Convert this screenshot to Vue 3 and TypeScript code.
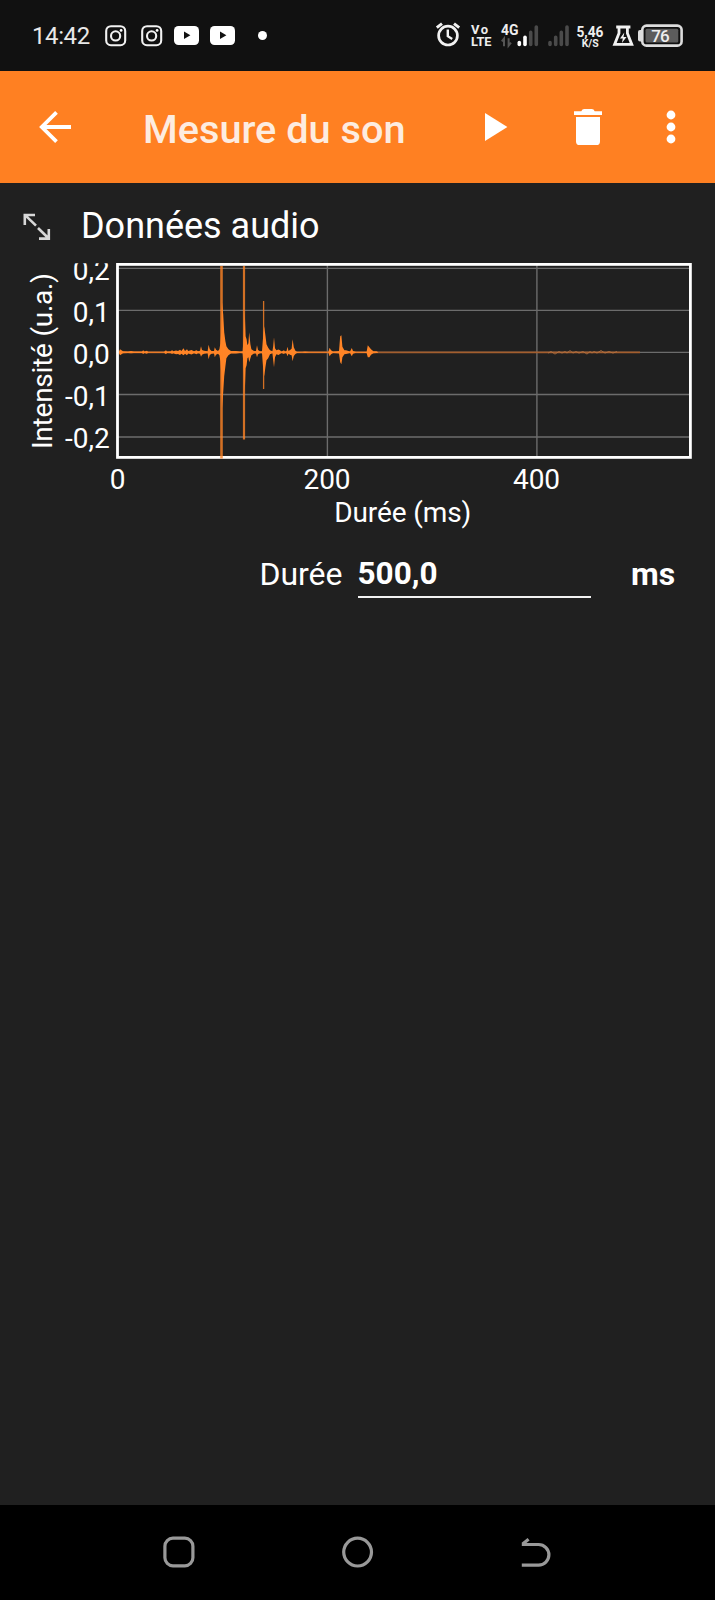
<script setup lang="ts">
type Sample = [x: number, up: number, down: number]

const baseline = 102.3
const top = 14
const bottom = 208.5

// Envelope of the audio signal: horizontal position, height above and below zero
const envelope: Sample[] = [
  [119, 1, 1], [120, 3, 3], [121.5, 2, 2], [123, 1, 1], [128, 0.7, 0.7], [131, 1.3, 1], [134, 0.7, 0.7],
  [142, 0.8, 0.8], [143.2, 2, 1.6], [144.4, 0.7, 0.7], [147, 1.6, 1.4], [148, 0.5, 0.5], [164, 0.5, 0.5],
  [166, 2, 2], [167, 0.8, 0.8], [171, 1, 1], [172, 2.4, 1.6], [173.2, 1, 1], [176, 1.8, 2], [178, 1.4, 1.6],
  [180, 2.6, 2.6], [181.4, 1.4, 1.4], [183.5, 4, 3], [185, 1.4, 1.4], [187, 3, 3], [188.2, 1.2, 1.2],
  [191.5, 2.4, 2.2], [194, 1, 1], [196.5, 2, 2], [198, 1, 1], [200, 1.5, 1.5], [201, 6, 4.5], [202, 2.4, 2.4],
  [204, 1.5, 1.5], [207.6, 1, 1], [208.6, 7.5, 7], [209.8, 3, 2.6], [211.5, 1.4, 1.4], [214, 1.2, 1.2],
  [214.8, 5, 5], [216, 2.5, 2.5], [218, 1.4, 1.4], [219.4, 3, 3], [220.4, 9, 9], [221.2, 20, 20],
  [222, 50, 56], [223.2, 38, 40], [224.2, 20, 24], [225.4, 11, 14], [226.4, 6, 6], [228.4, 3, 3],
  [231, 1.2, 1.2], [236, 1.2, 1.2], [240, 0.8, 0.8], [242.6, 1, 1], [243.6, 14, 14], [244.8, 40, 40],
  [245.6, 16, 16], [246.6, 13, 13], [247.4, 7, 6], [248.4, 9, 5], [249.2, 20, 10], [250.4, 8, 6],
  [251.4, 3, 3], [254, 1.2, 1.2], [256, 1.2, 1.2], [257, 7, 5], [258, 2.2, 2], [260, 1, 1], [262, 1, 1],
  [263, 14, 14], [264.2, 26, 24], [265.4, 17, 15], [266.5, 8, 8], [268.2, 4.5, 6], [270, 2, 2],
  [272.4, 1, 1], [273.2, 6, 8], [274, 15, 15], [275, 4, 5], [276.4, 2, 2], [278.5, 2.8, 2.6], [280, 2, 1.8],
  [281.5, 0.7, 0.7], [284, 2, 1.6], [285, 0.8, 0.8], [286.5, 1.2, 1.2], [287.5, 5.5, 4], [288.5, 1.4, 1.4],
  [290.4, 2.6, 2.6], [291.6, 3.6, 3], [292.6, 13, 9], [293.8, 5, 3.8], [295.4, 1.6, 1.6], [297, 0.6, 0.6],
  [302, 0.5, 0.5], [305, 0.7, 0.7], [309, 0.5, 0.5], [328.4, 0.5, 0.5], [329.6, 4.5, 4], [331, 2, 2],
  [333, 0.7, 0.7], [337, 1, 1], [339, 1.2, 1.2], [340.2, 16, 10], [341.4, 17, 12], [342.4, 5.5, 5],
  [344.4, 2, 2], [346, 2, 1.8], [350, 0.8, 0.8], [351.8, 4.4, 4], [353, 1.4, 1.4], [356, 0.5, 0.5],
  [366.6, 0.6, 0.6], [367.8, 7, 5], [369.4, 5, 5], [371, 3, 2.4], [373.4, 1, 1], [376.5, 1, 0.8], [378, 0.4, 0.4],
]

const upper = envelope.map(([x, up]) => `${x},${baseline - up}`)
const lower = [...envelope].reverse().map(([x, , down]) => `${x},${baseline + down}`)
const wave = [...upper, ...lower].join(' ')

const quiet = [548, 551, 555, 559, 562, 565, 567, 570, 573, 576, 579, 583, 587, 590, 592, 594, 597, 601, 605, 609, 613, 617]
const ripple = quiet.map((x, i) => `${x},${baseline + (i % 2 ? -1 : 1) * (i % 5 === 2 ? 1.8 : 0.8)}`).join(' ')

const peaks: { x: number; from: number; to: number; width: number }[] = [
  { x: 221.5, from: top + 2, to: bottom, width: 2.6 },
  { x: 244, from: top + 2, to: 189.5, width: 2.2 },
  { x: 263.6, from: 51, to: 139, width: 1.3 },
]

const rows = [
  { y: 18.4, text: 30, label: '0,2' },
  { y: 60.4, text: 72.3, label: '0,1' },
  { y: 102.4, text: 114.3, label: '0,0' },
  { y: 144.5, text: 156.2, label: '-0,1' },
  { y: 187, text: 198, label: '-0,2' },
]
const columns = [
  { x: 118, label: '0' },
  { x: 327.4, label: '200' },
  { x: 536.9, label: '400' },
]
</script>

<template>
  <div class="screen">
    <header class="status">
      <div class="status-left">
        <span class="clock">14:42</span>
        <svg v-for="n in 2" :key="'i' + n" class="insta" viewBox="0 0 22 22">
          <rect x="1.2" y="1.2" width="19" height="19" rx="4.8" />
          <circle cx="10.6" cy="10.9" r="4.6" />
          <circle class="fill" cx="16.1" cy="5.4" r="1.4" />
        </svg>
        <svg v-for="n in 2" :key="'y' + n" class="tube" viewBox="0 0 25 19">
          <rect width="25" height="19" rx="4.5" />
          <path d="M10 5.6 16.4 9.3 10 13z" />
        </svg>
        <span class="dot"></span>
      </div>
      <svg class="status-right" viewBox="0 0 255 40">
        <g class="line">
          <circle cx="13" cy="21.6" r="9.4" stroke-width="2.7" />
          <path d="M12.8 15.4v6.8l4.4 2.8" stroke-width="2.4" />
          <path d="M1.8 13.6 7 9.6M19 9.6l5.2 4" stroke-width="3" />
        </g>
        <text x="36" y="20.2" class="bold" font-size="13" textLength="17">Vo</text>
        <text x="36" y="32.4" class="bold" font-size="13.6" textLength="20.5" lengthAdjust="spacingAndGlyphs">LTE</text>
        <text x="66" y="21.4" class="bold" font-size="14" textLength="17.5" lengthAdjust="spacingAndGlyphs">4G</text>
        <g class="arrows">
          <path d="M66.8 27.4 69 24.6v7.6M73.6 24.2v7.4l2.4-3" />
        </g>
        <g class="bars">
          <path class="on" d="M84.3 28.6v1.8" />
          <path class="on" d="M90 23.2v7.2" />
          <path d="M95.7 18.4v12M101.3 13v17.4M115 28.6v1.8M120.7 23.2v7.2M126.3 18.4v12M132 13v17.4" />
        </g>
        <text x="141.5" y="22.6" class="bold" font-size="14.6" textLength="27" lengthAdjust="spacingAndGlyphs">5,46</text>
        <text x="146.7" y="33" class="bold" font-size="11.6" textLength="17" lengthAdjust="spacingAndGlyphs">K/S</text>
        <g class="line">
          <path d="M181.2 13h14.2M184 13.6v5.6l-4.4 11.2h17.2l-4.4-11.2v-5.6" stroke-width="2.8" />
          <path class="solid" d="M189.3 18.4 185 24.6h2.8l-.9 4.4 4.6-6.1h-3z" />
        </g>
        <rect class="nub" x="203" y="16" width="5" height="11.6" rx="2" />
        <rect class="battery" x="207.3" y="11.6" width="39.3" height="20" rx="4.2" />
        <rect class="charge" x="210.5" y="14.8" width="32.8" height="13.6" rx="1.5" />
        <text x="216.3" y="28" class="percent" font-size="17" textLength="18.4">76</text>
      </svg>
    </header>

    <nav class="appbar">
      <svg class="back" viewBox="0 0 34 34">
        <path d="M33 17H4M18.5 2.3 3.8 17l14.7 14.7" />
      </svg>
      <h1>Mesure du son</h1>
      <svg class="play" viewBox="0 0 23 28"><path d="M0 0v28l22.4-14z" /></svg>
      <svg class="trash" viewBox="0 0 28 36">
        <path d="M0 2.2h7.3Q8.2 0 10.2 0h7.6q2 0 2.9 2.2H28V6.1H0zM2 8h24v24.4a3.6 3.6 0 0 1-3.6 3.6H5.6A3.6 3.6 0 0 1 2 32.4z" />
      </svg>
      <svg class="more" viewBox="0 0 10 34">
        <circle cx="5" cy="5" r="4.4" /><circle cx="5" cy="17" r="4.4" /><circle cx="5" cy="29" r="4.4" />
      </svg>
    </nav>

    <main>
      <div class="heading">
        <svg class="expand" viewBox="0 0 28 28">
          <path d="M1.8 12V2H12M2.4 2.4 13 12.6M25.8 16v9.6H16M25.2 25 15 15" />
        </svg>
        <h2>Données audio</h2>
      </div>

      <svg class="chart" viewBox="0 0 715 290">
        <defs>
          <clipPath id="labels"><rect x="0" y="13.2" width="715" height="277" /></clipPath>
        </defs>
        <g class="grid">
          <path v-for="r in rows" :key="r.y" :d="`M118 ${r.y}H690`" />
          <path v-for="c in columns.slice(1)" :key="c.x" :d="`M${c.x} 14V207`" />
        </g>
        <rect class="frame" x="117.5" y="14.4" width="572.9" height="193" />
        <path class="zero" :d="`M119 ${baseline}H640`" />
        <polyline class="ripple" :points="ripple" />
        <polygon class="wave" :points="wave" />
        <path v-for="p in peaks" :key="p.x" class="peak" :d="`M${p.x} ${p.from}V${p.to}`" :stroke-width="p.width" />
        <g class="axis" clip-path="url(#labels)">
          <text v-for="r in rows" :key="r.label" x="109.8" :y="r.text" text-anchor="end">{{ r.label }}</text>
          <text v-for="c in columns" :key="c.label" :x="c.x - 0.4" y="239.4" text-anchor="middle">{{ c.label }}</text>
          <text x="334.3" y="272" textLength="137">Durée (ms)</text>
          <text transform="translate(52 199) rotate(-90)" textLength="176">Intensité (u.a.)</text>
        </g>
      </svg>

      <div class="field">
        <span class="label">Durée</span>
        <span class="value">500,0</span>
        <span class="unit">ms</span>
      </div>
    </main>

    <footer>
      <svg viewBox="0 0 34 34"><rect x="2.9" y="2.2" width="28" height="27.6" rx="8" /></svg>
      <svg viewBox="0 0 34 34"><circle cx="16.6" cy="16.1" r="13.9" /></svg>
      <svg viewBox="0 0 34 34"><path d="M1.8 8.5H18.6a10.3 10.3 0 0 1 0 20.6H1.8M2.6 8 8.6 3.2" /></svg>
    </footer>
  </div>
</template>

<style>
body {
  margin: 0;
  background: #202020;
}
</style>

<style scoped>
.screen {
  width: 715px;
  height: 1600px;
  display: flex;
  flex-direction: column;
  background: #202020;
  color: #fff;
  font-family: Roboto, 'Liberation Sans', sans-serif;
  overflow: hidden;
}
svg {
  display: block;
  flex: none;
}
.status {
  height: 71px;
  flex: none;
  display: flex;
  justify-content: space-between;
  background: #111;
}
.status-left {
  display: flex;
  align-items: center;
  padding-left: 32px;
}
.clock {
  width: 72.5px;
  font-size: 24px;
  line-height: 28px;
  letter-spacing: -0.4px;
  color: #e8e8e8;
  padding-top: 1px;
  box-sizing: border-box;
}
.insta {
  width: 22px;
  height: 22px;
  margin-right: 14px;
  fill: none;
  stroke: #f2f2f2;
  stroke-width: 2.1;
}
.insta .fill {
  fill: #fff;
  stroke: none;
}
.tube {
  width: 25px;
  height: 19px;
  margin-right: 11px;
  fill: #fff;
}
.insta + .tube {
  margin-left: -2.5px;
}
.tube path {
  fill: #111;
}
.dot {
  width: 9px;
  height: 9px;
  margin-left: 11.5px;
  border-radius: 50%;
  background: #fff;
}
.status-right {
  width: 255px;
  height: 40px;
  margin: 14px 25px 0 0;
  fill: #eee;
}
.bold {
  font-weight: 700;
}
.line {
  fill: none;
  stroke: #f2f2f2;
}
.line .solid {
  fill: #f2f2f2;
  stroke: none;
}
.arrows {
  fill: none;
  stroke: #555;
  stroke-width: 2;
}
.bars {
  stroke: #4a4a4a;
  stroke-width: 3.6;
  stroke-linecap: round;
}
.bars .on {
  stroke: #fff;
}
.nub {
  fill: #ddd;
}
.battery {
  fill: #111;
  stroke: #ddd;
  stroke-width: 2.6;
}
.charge {
  fill: #5c5c5c;
}
.percent {
  font-weight: 500;
}
.appbar {
  height: 112px;
  flex: none;
  display: flex;
  align-items: center;
  background: #ff8022;
  fill: #fff;
}
.back {
  width: 34px;
  height: 34px;
  margin-left: 38px;
  fill: none;
  stroke: #fff;
  stroke-width: 3.8;
}
h1 {
  width: 341.5px;
  margin: 6px 0 0 71px;
  font-size: 39.7px;
  line-height: 48px;
  font-weight: 500;
  color: #fdece0;
  white-space: nowrap;
}
.play {
  width: 23px;
  height: 28px;
}
.trash {
  width: 28px;
  height: 36px;
  margin-left: 66.5px;
}
.more {
  width: 10px;
  height: 34px;
  margin-left: 64.3px;
}
main {
  flex: 1;
}
.heading {
  height: 67px;
  display: flex;
  align-items: flex-start;
}
.expand {
  width: 28px;
  height: 28px;
  margin: 30px 0 0 22.7px;
  fill: none;
  stroke: #d8d8d8;
  stroke-width: 2.6;
}
h2 {
  margin: 22px 0 0 30.3px;
  font-size: 36px;
  line-height: 42px;
  font-weight: 400;
}
.chart {
  width: 715px;
  height: 290px;
}
.grid {
  fill: none;
  stroke: #6c6c6c;
  stroke-width: 1.4;
}
.frame {
  fill: none;
  stroke: #fff;
  stroke-width: 2.8;
}
.zero {
  stroke: #a35e2e;
  stroke-width: 1.8;
}
.ripple {
  fill: none;
  stroke: #b87443;
  stroke-width: 0.8;
}
.wave {
  fill: #ff8426;
}
.peak {
  stroke: #ff8426;
  stroke-opacity: 0.8;
}
.axis {
  fill: #fff;
  font-size: 28px;
}
.field {
  display: flex;
  align-items: flex-start;
  height: 62px;
  padding-top: 14px;
  font-size: 32px;
  line-height: 40px;
}
.label {
  width: 342.5px;
  text-align: right;
}
.value {
  width: 233.5px;
  height: 42px;
  margin-left: 15px;
  border-bottom: 2.5px solid #f2f2f2;
  font-size: 31.5px;
  font-weight: 700;
}
.unit {
  margin-left: 40px;
  font-weight: 700;
}
footer {
  height: 95px;
  flex: none;
  display: flex;
  justify-content: center;
  gap: 145px;
  padding-top: 31px;
  box-sizing: border-box;
  background: #000;
}
footer svg {
  width: 34px;
  height: 34px;
  fill: none;
  stroke: #999;
  stroke-width: 3.2;
}
</style>
